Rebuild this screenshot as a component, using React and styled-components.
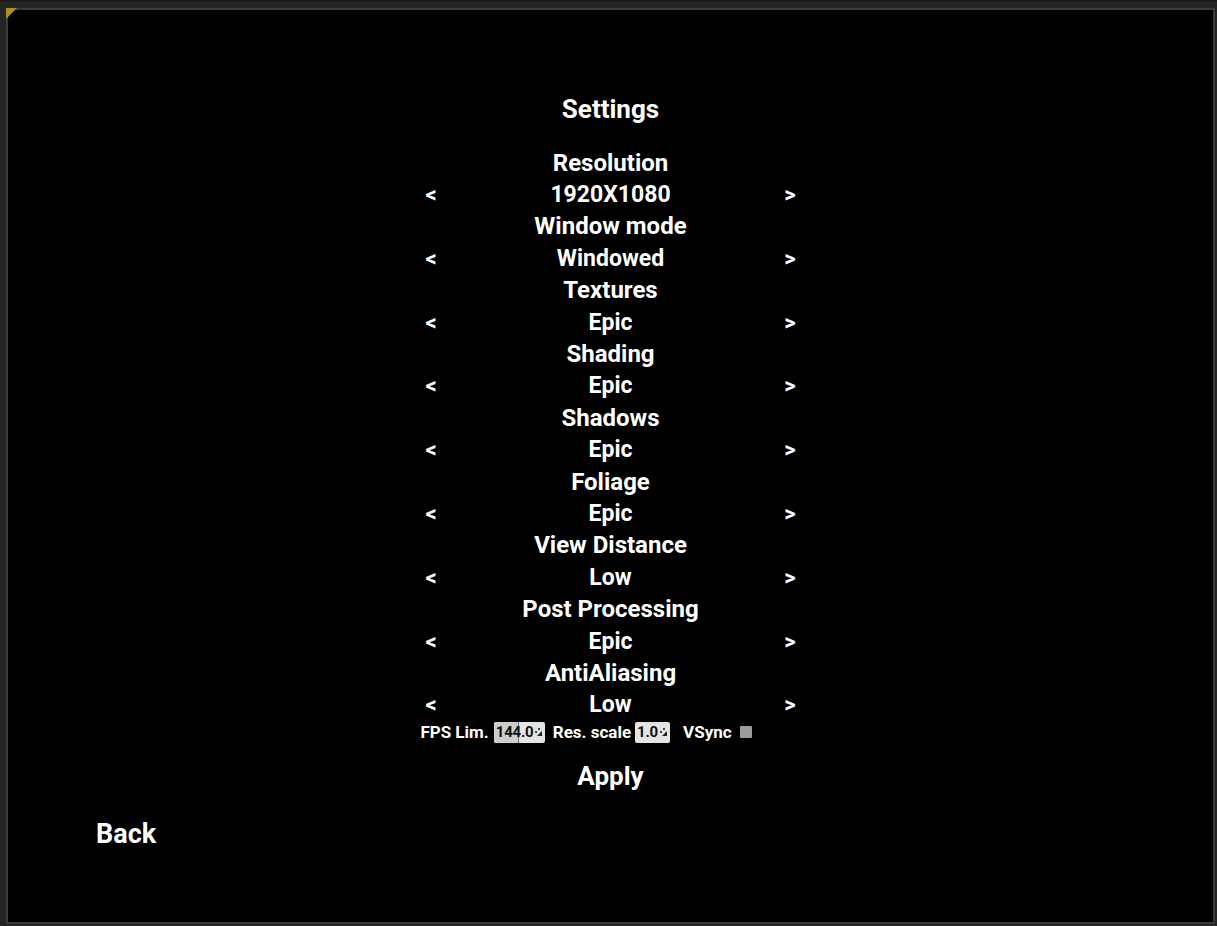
import React from "react";
import styled, { createGlobalStyle } from "styled-components";

const Global = createGlobalStyle`
  html, body { margin: 0; padding: 0; background: #242424; }
  #root { height: 100vh; }
  * { box-sizing: border-box; }
`;

const Frame = styled.div`
  height: 926px;
  width: 1217px;
  padding: 6px 2px 2px 6px;
  background: #252525;
  border-top: 2px solid #1a1a1a;
  position: relative;
`;

const Panel = styled.div`
  height: 100%;
  border: 2px solid #3b3b3b;
  background: #000;
  position: relative;
  display: flex;
  flex-direction: column;
  font-family: Roboto, "Noto Sans", sans-serif;
  font-weight: 700;
  color: #fff;
`;

const Corner = styled.div`
  position: absolute;
  left: -2px;
  top: -2px;
  width: 0;
  height: 0;
  border-top: 11px solid #b08d1c;
  border-right: 11px solid transparent;
`;

const Center = styled.div`
  display: flex;
  flex-direction: column;
  align-items: center;
  padding-top: 83px;
`;

const Title = styled.div`
  font-size: 26px;
  line-height: 32px;
  margin-bottom: 22.5px;
`;

const Label = styled.div`
  font-size: 24px;
  line-height: 31.9px;
  text-align: center;
`;

const OptionRow = styled.div`
  display: grid;
  grid-template-columns: 20px 1fr 20px;
  width: 379px;
  font-size: 23px;
  line-height: 31.9px;
  text-align: center;
  position: relative;
  top: -0.5px;
`;

const Arrow = styled.span`
  font-size: 22px;
`;

const ExtraRow = styled.div`
  display: flex;
  align-items: center;
  height: 22px;
  margin-top: -0.5px;
  margin-right: 49px;
  font-size: 17px;
`;

const Text = styled.span`
  margin-right: ${(p) => p.$gap || 4}px;
  white-space: nowrap;
`;

const Spin = styled.div`
  position: relative;
  display: flex;
  align-items: center;
  flex: none;
  width: ${(p) => p.$w}px;
  height: 21px;
  border-radius: 2px;
  background: #e4e4e4;
  color: #111;
  font-size: 15px;
  letter-spacing: -0.2px;
  padding-left: 2px;
  margin-right: ${(p) => p.$mr}px;
  overflow: hidden;
`;

const Fill = styled.div`
  position: absolute;
  left: 0;
  top: 0;
  bottom: 0;
  background: #cdcdcd;
  border-right: 1px solid #6a6a6a;
`;

const SpinText = styled.span`
  position: relative;
`;

const SpinIcon = styled.svg`
  position: absolute;
  right: 2px;
  top: 6px;
`;

const Check = styled.div`
  flex: none;
  width: 12px;
  height: 12px;
  background: #9b9b9b;
  border-radius: 1px;
  margin-left: 4px;
`;

const Apply = styled.div`
  font-size: 26px;
  line-height: 32px;
  margin-top: 17px;
`;

const Back = styled.div`
  font-size: 27px;
  line-height: 32px;
  margin: 26px 0 0 88px;
`;

const options = [
  ["Resolution", "1920X1080"],
  ["Window mode", "Windowed"],
  ["Textures", "Epic"],
  ["Shading", "Epic"],
  ["Shadows", "Epic"],
  ["Foliage", "Epic"],
  ["View Distance", "Low"],
  ["Post Processing", "Epic"],
  ["AntiAliasing", "Low"],
];

const Icon = () => (
  <SpinIcon width="8" height="8" viewBox="0 0 8 8">
    <rect x="0" y="3" width="2" height="2" fill="#444" />
    <rect x="3" y="0" width="2" height="2" fill="#444" />
    <path d="M7 3 L7 8 L2 8 Z" fill="#222" />
  </SpinIcon>
);

export default function App() {
  return (
    <>
      <Global />
      <Frame>
        <Panel>
          <Corner />
          <Center>
            <Title>Settings</Title>
            {options.map(([label, value]) => (
              <React.Fragment key={label}>
                <Label>{label}</Label>
                <OptionRow>
                  <Arrow>&lt;</Arrow>
                  <span>{value}</span>
                  <Arrow>&gt;</Arrow>
                </OptionRow>
              </React.Fragment>
            ))}
            <ExtraRow>
              <Text $gap={5}>FPS Lim.</Text>
              <Spin $w={51} $mr={8}>
                <Fill style={{ width: "25px" }} />
                <SpinText>144.0</SpinText>
                <Icon />
              </Spin>
              <Text $gap={4}>Res. scale</Text>
              <Spin $w={35} $mr={13}>
                <SpinText>1.0</SpinText>
                <Icon />
              </Spin>
              <Text $gap={0}>VSync</Text>
              <Check />
            </ExtraRow>
            <Apply>Apply</Apply>
          </Center>
          <Back>Back</Back>
        </Panel>
      </Frame>
    </>
  );
}
